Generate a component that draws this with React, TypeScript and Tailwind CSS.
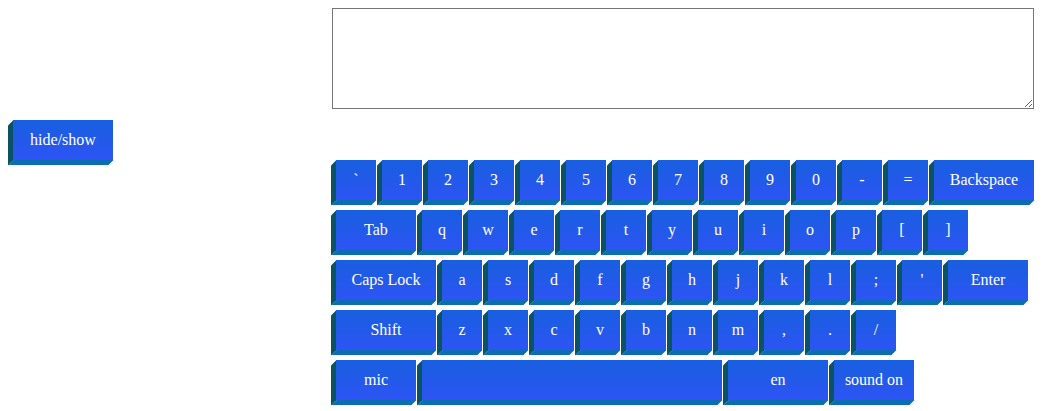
import React from "react"

const serif = { fontFamily: '"Liberation Serif", "Times New Roman", Times, serif' }

const keyBase =
  "relative h-[40px] shrink-0 flex items-center justify-center bg-[linear-gradient(to_bottom,#185fdf,#2d54f4)] text-white text-[16px] leading-none before:content-[''] before:absolute before:top-[2.5px] before:left-[-5px] before:h-full before:w-[5px] before:bg-[#0b5263] before:[transform:skewY(-45deg)] after:content-[''] after:absolute after:bottom-[-5px] after:left-[-2.5px] after:w-full after:h-[5px] after:bg-[#0c6db4] after:[transform:skewX(-45deg)]"

type KeyDef = { label: string; size?: string }

const rows: KeyDef[][] = [
  [
    ..."`1234567890-=".split("").map((k) => ({ label: k })),
    { label: "Backspace", size: "w-[100px]" },
  ],
  [{ label: "Tab", size: "w-[80px]" }, ..."qwertyuiop[]".split("").map((k) => ({ label: k }))],
  [
    { label: "Caps Lock", size: "w-[100px]" },
    ..."asdfghjkl;'".split("").map((k) => ({ label: k })),
    { label: "Enter", size: "w-[80px]" },
  ],
  [{ label: "Shift", size: "w-[100px]" }, ..."zxcvbnm,./".split("").map((k) => ({ label: k }))],
  [
    { label: "mic", size: "w-[80px]" },
    { label: "", size: "w-[300px]" },
    { label: "en", size: "w-[100px]" },
    { label: "sound on", size: "w-[80px]" },
  ],
]

function Key({ label, size = "w-[40px]" }: KeyDef) {
  return (
    <button className={`${keyBase} ${size} ml-[6px] first:ml-[5px]`} style={serif}>
      {label}
    </button>
  )
}

export default function App() {
  return (
    <div className="flex h-[411px] w-[1048px] bg-white" style={serif}>
      <div className="w-[331px] shrink-0 pl-[13px] pt-[120px]">
        <button className={`${keyBase} w-[100px]`} style={serif}>
          hide/show
        </button>
      </div>
      <div className="pt-[8px]">
        <textarea className="ml-[1px] block h-[101px] w-[702px] border border-[#767676] bg-white" />
        <div className="mt-[51px] flex flex-col gap-[10px]">
          {rows.map((row, i) => (
            <div key={i} className="flex">
              {row.map((k, j) => (
                <Key key={j} {...k} />
              ))}
            </div>
          ))}
        </div>
      </div>
    </div>
  )
}
